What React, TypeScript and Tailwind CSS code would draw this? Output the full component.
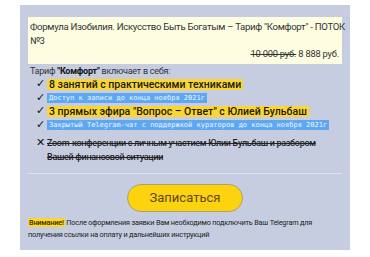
import React from "react";

// Tariff card: included / excluded features
const features = [
  { text: "8 занятий с практическими техниками", kind: "yellow" },
  { text: "Доступ к записи до конца ноября 2021г", kind: "blue" },
  { text: "3 прямых эфира \"Вопрос – Ответ\" с Юлией Бульбаш", kind: "yellow" },
  { text: "Закрытый Telegram-чат с поддержкой кураторов до конца ноября 2021г", kind: "blue" },
];

export default function App() {
  return (
    <div className="w-[370px] h-[257px] bg-white pt-[5px] pl-[20px] font-[Roboto,sans-serif] text-[#222]">
      <div className="w-[330px] h-[245px] bg-[#c6cde1] px-[8px] pt-[12px]">
        <div className="bg-[#fdfde1] px-[2px] pt-[3px] pb-[3px] text-[9.6px] tracking-[-0.3px] leading-[13.5px] text-[#333]">
          <div>
            <span className="whitespace-nowrap">Формула Изобилия. Искусство Быть Богатым – Тариф "Комфорт" - ПОТОК</span> №3
          </div>
          <div className="text-right text-[9.3px] tracking-[-0.2px] pr-[1px]">
            <span className="line-through">10 000 руб.</span> 8 888 руб.
          </div>
        </div>

        <div className="pl-[2px] text-[9px] tracking-[-0.25px] leading-[14px] text-[#333]">
          Тариф <b className="text-[#111]">"Комфорт"</b> включает в себя:
        </div>

        <ul className="pl-[8px] text-[10.5px]">
          {features.map((f) => (
            <li key={f.text} className="flex items-center h-[13.5px]">
              <span className="w-[11px] text-[#111]">✓</span>
              {f.kind === "yellow" ? (
                <span className="bg-[#fcd630] px-[2px] font-medium leading-[11px] text-[#1a1a1a]">{f.text}</span>
              ) : (
                <span className="whitespace-nowrap bg-[#5ea8f2] px-[2px] font-['DejaVu_Sans_Mono','Liberation_Mono',monospace] text-[7px] leading-[10px] text-[#eef6ff]">
                  {f.text}
                </span>
              )}
            </li>
          ))}
          <li className="flex pt-[4px] leading-[14px]">
            <span className="w-[11px] text-[#111]">✕</span>
            <span className="line-through font-medium text-[9px] tracking-[-0.3px] text-[#222]">
              <span className="block whitespace-nowrap">Zoom-конференции с личным участием Юлии Бульбаш и разбором</span>
              <span className="block">Вашей финансовой ситуации</span>
            </span>
          </li>
        </ul>

        <div className="mt-[9px] border-t border-[#dde2ee]" />

        <div className="flex justify-center pt-[10px]">
          <button className="w-[116px] h-[28px] rounded-full bg-[#fdd20f] border border-[#a7a36a] text-[13px] text-[#5c4a1a]">
            Записаться
          </button>
        </div>

        <div className="pt-[5px] text-[7.3px] tracking-[-0.2px] leading-[12px] text-[#222]">
          <span className="bg-[#fcd630] px-[1px] font-medium text-[#3a2a00]">Внимание!</span> После оформления заявки Вам необходимо подключить Ваш Telegram для получения ссылки на оплату и дальнейших инструкций
        </div>
      </div>
    </div>
  );
}
